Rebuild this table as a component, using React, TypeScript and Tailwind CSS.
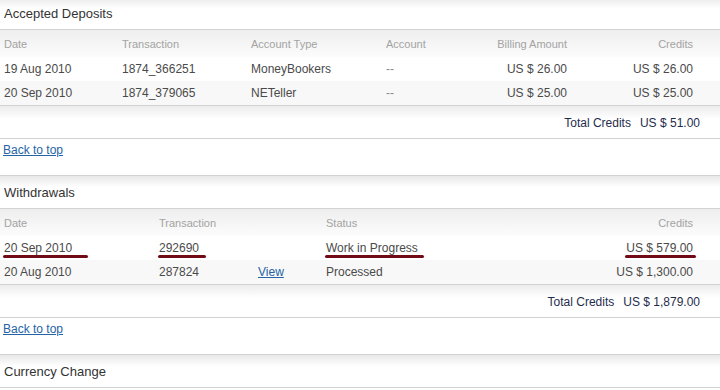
import React from 'react';

type Col = { label: string; width: string; align?: 'right' };
type Cell = { text: string; link?: boolean; muted?: boolean; mark?: string };

const font = { fontFamily: '"Liberation Sans", Arial, sans-serif' };

const depositCols: Col[] = [
  { label: 'Date', width: 'w-[118px]' },
  { label: 'Transaction', width: 'w-[129px]' },
  { label: 'Account Type', width: 'w-[135px]' },
  { label: 'Account', width: 'w-[81px]' },
  { label: 'Billing Amount', width: 'w-[100px]', align: 'right' },
  { label: 'Credits', width: 'w-[126px]', align: 'right' },
];

const deposits: Cell[][] = [
  [{ text: '19 Aug 2010' }, { text: '1874_366251' }, { text: 'MoneyBookers' }, { text: '--', muted: true }, { text: 'US $ 26.00' }, { text: 'US $ 26.00' }],
  [{ text: '20 Sep 2010' }, { text: '1874_379065' }, { text: 'NETeller' }, { text: '--', muted: true }, { text: 'US $ 25.00' }, { text: 'US $ 25.00' }],
];

const withdrawalCols: Col[] = [
  { label: 'Date', width: 'w-[155px]' },
  { label: 'Transaction', width: 'w-[99px]' },
  { label: '', width: 'w-[68px]' },
  { label: 'Status', width: 'w-[241px]' },
  { label: 'Credits', width: 'w-[126px]', align: 'right' },
];

const withdrawals: Cell[][] = [
  [
    { text: '20 Sep 2010', mark: '-right-[16px]' },
    { text: '292690', mark: '-right-[7px]' },
    { text: '' },
    { text: 'Work in Progress', mark: '-right-[6px]' },
    { text: 'US $ 579.00', mark: '-right-[3px]' },
  ],
  [{ text: '20 Aug 2010' }, { text: '287824' }, { text: 'View', link: true }, { text: 'Processed' }, { text: 'US $ 1,300.00' }],
];

const SectionTitle: React.FC<{ title: string }> = ({ title }) => (
  <div className="h-[33px] flex items-center pl-[4px] pt-[1px] text-[13px] text-[#333] bg-linear-to-b from-[#e8e8e8] to-white to-[35%] border-b border-[#d2d2d2]">
    {title}
  </div>
);

const BackToTop: React.FC = () => (
  <div className="h-[37px] pl-[3px] pt-[2px] text-[12px] border-b border-[#d2d2d2]">
    <a href="#top" className="text-[#2563a6] underline">Back to top</a>
  </div>
);

const DataTable: React.FC<{ cols: Col[]; rows: Cell[][]; total: string }> = ({ cols, rows, total }) => (
  <div>
    <div className="h-[27px] flex items-center pl-[4px] pt-[1px] text-[11px] text-[#a3a3a3] bg-linear-to-b from-[#eeeeee] to-[#fcfcfc]">
      {cols.map((c, i) => (
        <div key={i} className={`${c.width} shrink-0 ${c.align === 'right' ? 'text-right' : ''}`}>{c.label}</div>
      ))}
    </div>
    {rows.map((row, r) => (
      <div key={r} className={`h-[24px] flex items-center pl-[4px] text-[12px] text-[#4a4a4a] ${r % 2 ? 'bg-[#f8f8f8]' : 'bg-white'}`}>
        {row.map((cell, i) => (
          <div key={i} className={`${cols[i].width} shrink-0 ${cols[i].align === 'right' ? 'text-right' : ''}`}>
            {cell.link ? (
              <a href="#view" className="text-[#2563a6] underline">{cell.text}</a>
            ) : (
              <span className={`relative inline-block leading-[14px] ${cell.muted ? 'text-[#8a8a8a]' : ''}`}>
                {cell.text}
                {cell.mark && (
                  <span className={`absolute -left-[1px] ${cell.mark} -bottom-[3px] h-[3px] rounded-full bg-[#730b16]`} />
                )}
              </span>
            )}
          </div>
        ))}
      </div>
    ))}
    <div className="h-[34px] flex items-center justify-end pr-[20px] pt-[1px] text-[12px] text-[#1f2d4d] border-t border-[#d2d2d2] border-b bg-linear-to-b from-[#ececec] to-white to-[40%]">
      <span className="mr-[9px]">Total Credits</span>
      <span>{total}</span>
    </div>
  </div>
);

export default function App() {
  return (
    <div className="w-[720px] h-[390px] overflow-hidden bg-white" style={font}>
      <div className="-mt-[3px]">
        <SectionTitle title="Accepted Deposits" />
        <DataTable cols={depositCols} rows={deposits} total="US $ 51.00" />
        <BackToTop />
        <SectionTitle title="Withdrawals" />
        <DataTable cols={withdrawalCols} rows={withdrawals} total="US $ 1,879.00" />
        <BackToTop />
        <SectionTitle title="Currency Change" />
      </div>
    </div>
  );
}
